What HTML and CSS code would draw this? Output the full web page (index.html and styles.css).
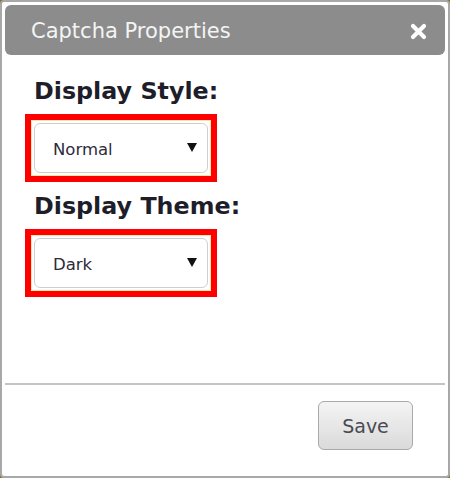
FILE: index.html
```html
<!DOCTYPE html>
<html>
<head>
<meta charset="utf-8">
<link rel="stylesheet" href="styles.css">
</head>
<body>
<div class="dialog">
  <div class="titlebar">
    <span class="title">Captcha Properties</span>
    <svg class="close" width="17" height="17" viewBox="0 0 17 17"><path d="M3 3 L14 14 M14 3 L3 14" stroke="#fff" stroke-width="4.2" stroke-linecap="round"/></svg>
  </div>
  <div class="content">
    <div class="label">Display Style:</div>
    <div class="highlight">
      <div class="select"><span class="value">Normal</span><span class="arrow"></span></div>
    </div>
    <div class="label">Display Theme:</div>
    <div class="highlight">
      <div class="select"><span class="value">Dark</span><span class="arrow"></span></div>
    </div>
  </div>
  <div class="divider"></div>
  <div class="footer">
    <button class="save">Save</button>
  </div>
</div>
</body>
</html>
```
FILE: styles.css
```css
html, body {
  margin: 0;
  padding: 0;
  background: #8a6a34;
}
.dialog {
  width: 450px;
  height: 478px;
  box-sizing: border-box;
  border: 2px solid #a8a8a8;
  border-radius: 4px;
  background: #fff;
  padding: 3px 0 0 3px;
  display: flex;
  flex-direction: column;
  font-family: "DejaVu Sans", Verdana, sans-serif;
}
.titlebar {
  height: 50px;
  margin-right: 3px;
  background: #8c8c8c;
  border-radius: 6px;
  display: flex;
  align-items: center;
  justify-content: space-between;
  padding: 0 18px 0 26px;
}
.title {
  color: #f4f4f4;
  font-size: 21px;
  margin-top: 1px;
}
.close {
  display: block;
  margin-top: 2px;
}
.content {
  flex: 1;
  padding: 22px 0 0 20px;
}
.label {
  font-weight: bold;
  font-size: 23.8px;
  line-height: 28px;
  color: #1e1e2a;
  margin-left: 9px;
  margin-bottom: 9px;
}
.highlight {
  width: 192px;
  height: 68px;
  box-sizing: border-box;
  border: 6px solid #ff0000;
  box-shadow: inset 0 0 0 1px #fde6a8;
  padding: 3px;
  margin-bottom: 10px;
}
.select {
  height: 100%;
  box-sizing: border-box;
  border: 1px solid #cfcfcf;
  border-radius: 6px;
  background: #fff;
  display: flex;
  align-items: center;
  justify-content: space-between;
  padding: 0 10px 0 18px;
}
.value {
  font-size: 16.5px;
  color: #2e2a3a;
  margin-top: 2px;
}
.arrow {
  width: 0;
  height: 0;
  border-left: 5px solid transparent;
  border-right: 5px solid transparent;
  border-top: 9px solid #111;
  margin-bottom: 2px;
}
.divider {
  height: 2px;
  margin-right: 3px;
  background: #c4c4c4;
}
.footer {
  height: 91px;
  display: flex;
  justify-content: flex-end;
  align-items: flex-start;
  padding: 16px 35px 0 0;
  box-sizing: border-box;
}
.save {
  width: 95px;
  height: 49px;
  border: 1px solid #a9a9a9;
  border-radius: 6px;
  background: linear-gradient(#f4f4f4, #dadada);
  font-family: "DejaVu Sans", Verdana, sans-serif;
  font-size: 19px;
  color: #4a4a55;
  padding: 0;
}
```
